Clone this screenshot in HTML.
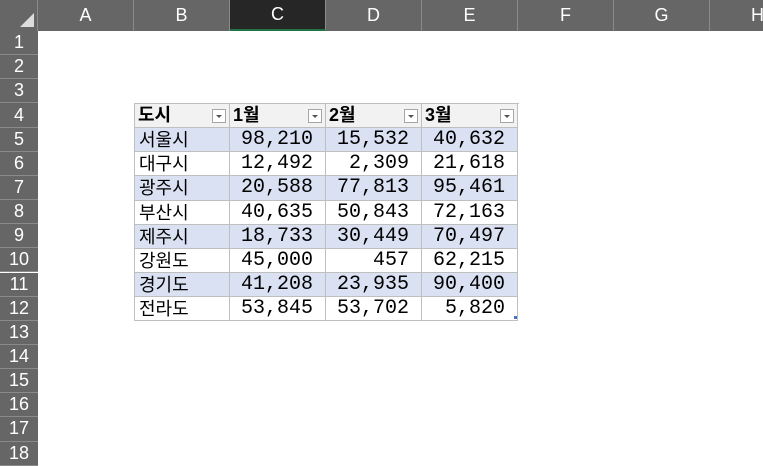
<!DOCTYPE html>
<html><head><meta charset="utf-8"><style>
body{margin:0;width:763px;height:447px;overflow:hidden;background:#fff;font-family:"Liberation Mono","Noto Sans CJK KR",monospace;position:relative}
.hd{position:absolute;top:0;height:31px;background:#666;color:#fff;font:18px "Liberation Sans","Noto Sans CJK KR",sans-serif;display:flex;align-items:center;justify-content:center;border-right:1px solid #8a8a8a;box-sizing:border-box}
.rh{position:absolute;left:0;width:38px;height:24.15px;background:#666;color:#fff;font:18px "Liberation Sans",sans-serif;display:flex;align-items:center;justify-content:center;border-bottom:1px solid #8a8a8a;box-sizing:border-box}
.tb{position:absolute;left:134px;top:103px;width:385px;border-left:1px solid #bfbfbf;border-top:1px solid #bfbfbf;box-sizing:border-box}
.r{display:flex;height:24.15px}
.r>div{width:96px;height:24.15px;border-right:1px solid #bfbfbf;border-bottom:1px solid #bfbfbf;box-sizing:border-box;font-size:20px;text-align:right;padding-right:12px;line-height:23px;position:relative;flex:none}
.r>div:first-child{width:95px}
.r>div.k{text-align:left;padding-left:4px;font-family:"Noto Sans CJK KR",sans-serif;font-size:18px;line-height:22px}
.r.b>div{background:#d9e1f2}
.r.h>div{background:#f2f2f2;font-weight:bold;text-align:left;padding-left:3px;font-family:"Liberation Sans","Noto Sans CJK KR",sans-serif;font-size:18px;line-height:22px}
.dd{position:absolute;right:3px;top:5px;width:14px;height:14px;border:1px solid #a6a6a6;background:#fff;box-sizing:border-box}
.dd:after{content:"";position:absolute;left:3px;top:5px;border-left:3px solid transparent;border-right:3px solid transparent;border-top:3px solid #555}
</style></head><body>
<div class="hd" style="left:0;width:38px"><div style="position:absolute;right:3px;bottom:4px;width:0;height:0;border-left:14px solid transparent;border-bottom:14px solid #ddd"></div></div>
<div class="hd" style="left:38px;width:96px">A</div>
<div class="hd" style="left:134px;width:96px">B</div>
<div class="hd" style="left:230px;width:96px;background:#262626;border-bottom:2px solid #217346">C</div>
<div class="hd" style="left:326px;width:96px">D</div>
<div class="hd" style="left:422px;width:96px">E</div>
<div class="hd" style="left:518px;width:96px">F</div>
<div class="hd" style="left:614px;width:96px">G</div>
<div class="hd" style="left:710px;width:96px">H</div>
<div class="rh" style="top:31px">1</div>
<div class="rh" style="top:55.15px">2</div>
<div class="rh" style="top:79.3px">3</div>
<div class="rh" style="top:103.45px">4</div>
<div class="rh" style="top:127.6px">5</div>
<div class="rh" style="top:151.75px">6</div>
<div class="rh" style="top:175.9px">7</div>
<div class="rh" style="top:200.05px">8</div>
<div class="rh" style="top:224.2px">9</div>
<div class="rh" style="top:248.35px">10</div>
<div class="rh" style="top:272.5px">11</div>
<div class="rh" style="top:296.65px">12</div>
<div class="rh" style="top:320.8px">13</div>
<div class="rh" style="top:344.95px">14</div>
<div class="rh" style="top:369.1px">15</div>
<div class="rh" style="top:393.25px">16</div>
<div class="rh" style="top:417.4px">17</div>
<div class="rh" style="top:441.55px">18</div>
<div class="tb">
<div class="r h"><div>도시<span class="dd"></span></div><div>1월<span class="dd"></span></div><div>2월<span class="dd"></span></div><div>3월<span class="dd"></span></div></div>
<div class="r b"><div class="k">서울시</div><div>98,210</div><div>15,532</div><div>40,632</div></div>
<div class="r"><div class="k">대구시</div><div>12,492</div><div>2,309</div><div>21,618</div></div>
<div class="r b"><div class="k">광주시</div><div>20,588</div><div>77,813</div><div>95,461</div></div>
<div class="r"><div class="k">부산시</div><div>40,635</div><div>50,843</div><div>72,163</div></div>
<div class="r b"><div class="k">제주시</div><div>18,733</div><div>30,449</div><div>70,497</div></div>
<div class="r"><div class="k">강원도</div><div>45,000</div><div>457</div><div>62,215</div></div>
<div class="r b"><div class="k">경기도</div><div>41,208</div><div>23,935</div><div>90,400</div></div>
<div class="r"><div class="k">전라도</div><div>53,845</div><div>53,702</div><div>5,820</div></div>
</div>
<div style="position:absolute;left:514px;top:316px;width:3px;height:3px;background:#4472c4"></div>
</body></html>
